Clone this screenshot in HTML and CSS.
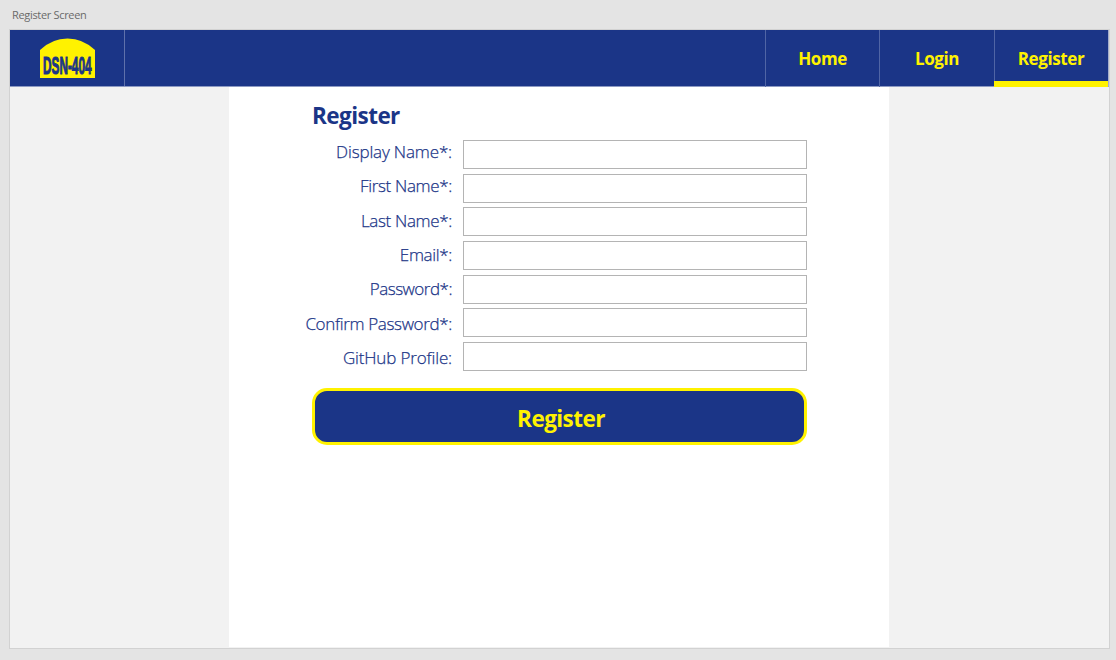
FILE: index.html
```html
<!DOCTYPE html>
<html lang="en">
<head>
<meta charset="utf-8">
<title>Register Screen</title>
<link rel="stylesheet" href="styles.css">
</head>
<body>
<div class="caption"><span>Register Screen</span></div>
<div class="artboard">
  <header class="topbar">
    <a class="brand">
      <svg class="logo" width="60" height="46" viewBox="0 0 60 46">
        <path class="logo-shape" d="M0 13Q12 1.500 27.500 1.500Q43 1.500 55 13V41H0Z"/>
        <text class="logo-text" x="3" y="36.500" textLength="48.500" lengthAdjust="spacingAndGlyphs">DSN-404</text>
      </svg>
    </a>
    <nav class="nav">
      <a class="nav-item home"><span>Home</span></a>
      <a class="nav-item login"><span>Login</span></a>
      <a class="nav-item active"><span>Register</span></a>
    </nav>
  </header>
  <main class="page">
    <h1 class="title"><span>Register</span></h1>
    <form class="form">
      <div class="labels">
        <label class="loose" for="display">Display Name*:</label>
        <label for="first">First Name*:</label>
        <label for="last">Last Name*:</label>
        <label for="email">Email*:</label>
        <label class="tight" for="password">Password*:</label>
        <label for="confirm">Confirm Password*:</label>
        <label class="loose" for="github">GitHub Profile:</label>
      </div>
      <div class="fields">
        <input id="display" type="text">
        <input id="first" type="text">
        <input id="last" type="text">
        <input id="email" type="text">
        <input id="password" type="password">
        <input id="confirm" type="password">
        <input id="github" type="text">
      </div>
    </form>
    <button class="submit" type="button"><span>Register</span></button>
  </main>
</div>
</body>
</html>
```
FILE: styles.css
```css
* { box-sizing: border-box; }
body {
  margin: 0;
  height: 660px;
  overflow: hidden;
  background: #e4e4e4;
  color: #1b3587;
  font-family: "Open Sans", "Noto Sans", sans-serif;
}
.caption {
  height: 29px;
  padding: 7px 0 0 12px;
  font-size: 11px;
  line-height: 16px;
  letter-spacing: -0.32px;
  color: #6a6a6a;
}
.artboard {
  width: 1101px;
  height: 620px;
  margin-left: 9px;
  border: 1px solid #d2d2d2;
  background: #f2f2f2;
}
.topbar {
  display: flex;
  justify-content: space-between;
  height: 57px;
  border-right: 1px solid #a4aecd;
  border-bottom: 1px solid #8d9ac3;
  background: #1b3587;
}
.brand {
  width: 115px;
  padding: 7px 0 0 30px;
  border-right: 1px solid #5f71ab;
}
.logo { display: block; overflow: visible; }
.logo-shape { fill: #fff200; }
.logo-text {
  fill: #1b3587;
  stroke: #1b3587;
  stroke-width: 1.1px;
  font: bold 24px "Liberation Sans", sans-serif;
}
.nav { display: flex; }
.nav-item {
  width: 115px;
  height: 57px;
  padding-top: 17px;
  border-left: 1px solid #5065a5;
  color: #fff200;
  font-size: 17px;
  font-weight: 750;
  letter-spacing: -0.4px;
  line-height: 24px;
  text-align: center;
}
.home { width: 114px; }
.active {
  width: 114px;
  border-left: 0;
  background: linear-gradient(#5065a5, #5065a5) 0 0 / 1px 51px no-repeat;
  border-bottom: 6px solid #fff200;
}
.page {
  width: 660px;
  height: 560px;
  margin-left: 219px;
  padding: 12px 82px 0 83px;
  background: #fff;
}
.title {
  margin: 0;
  height: 41px;
  font-size: 22.5px;
  font-weight: 700;
  letter-spacing: -0.55px;
  line-height: 33px;
}
.form {
  display: flex;
  gap: 11px;
  margin-left: -33px;
}
.labels {
  display: flex;
  flex-direction: column;
  width: 173px;
  text-align: right;
}
.labels label {
  height: 34.35px;
  font-size: 17px;
  font-weight: 300;
  letter-spacing: -0.34px;
  line-height: 24px;
  white-space: nowrap;
  -webkit-text-stroke: 0.25px #1b3587;
}
.labels .loose { letter-spacing: -0.15px; }
.labels .tight { letter-spacing: -0.5px; }
.fields {
  display: flex;
  flex-direction: column;
  gap: 4.7px;
}
.fields input {
  width: 344px;
  height: 29px;
  margin: 0;
  border: 1px solid #b4b4b4;
  background: #fff;
}
.submit {
  display: block;
  width: 495px;
  height: 57px;
  margin: 8px 0 0;
  padding: 4px 0 0 3px;
  border: 3px solid #fff200;
  border-radius: 15px;
  background: #1b3587;
  color: #fff200;
  font: 700 22.5px/32px "Open Sans", "Noto Sans", sans-serif;
  letter-spacing: -0.55px;
}
```
